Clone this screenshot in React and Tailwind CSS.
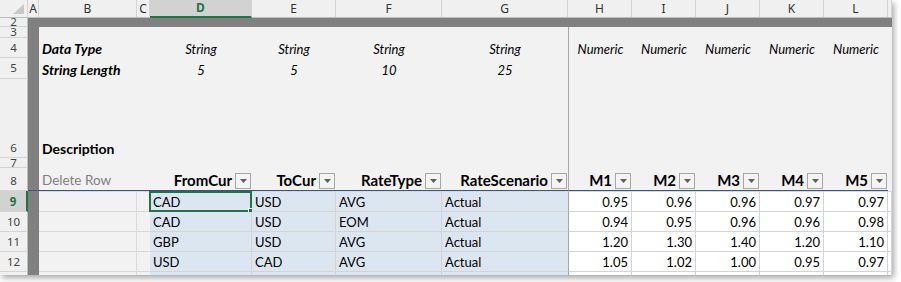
const COLW = ['w-[11px]', 'w-[98px]', 'w-[13px]', 'w-[102px]', 'w-[84px]', 'w-[106px]', 'w-[126px]', 'w-[64px]', 'w-[64px]', 'w-[64px]', 'w-[64px]', 'w-[64px]', 'w-[4px]'];
const LETTERS = ['A', 'B', 'C', 'D', 'E', 'F', 'G', 'H', 'I', 'J', 'K', 'L', ''];

const DATA = [
  { from: 'CAD', to: 'USD', type: 'AVG', scen: 'Actual', m: ['0.95', '0.96', '0.96', '0.97', '0.97'] },
  { from: 'CAD', to: 'USD', type: 'EOM', scen: 'Actual', m: ['0.94', '0.95', '0.96', '0.96', '0.98'] },
  { from: 'GBP', to: 'USD', type: 'AVG', scen: 'Actual', m: ['1.20', '1.30', '1.40', '1.20', '1.10'] },
  { from: 'USD', to: 'CAD', type: 'AVG', scen: 'Actual', m: ['1.05', '1.02', '1.00', '0.95', '0.97'] },
];

function RowHead({ label, active, center }) {
  return (
    <div
      className={`w-[28px] shrink-0 flex justify-center overflow-hidden border-b border-r font-['Noto_Sans',sans-serif] text-[11.5px] leading-[16px] ${center ? 'items-center' : 'items-end pb-[1px]'} ${active ? 'bg-[#d2d2d2] border-b-[#d4d4d4] border-r-2 border-r-[#217346] text-[#217346] font-bold' : 'bg-[#f0f0f0] border-b-[#d4d4d4] border-r-[#bdbdbd] text-[#444]'}`}
    >
      {label}
    </div>
  );
}

function Cell({ i, className = '', children }) {
  return <div className={`${COLW[i]} shrink-0 flex whitespace-nowrap ${className}`}>{children}</div>;
}

function Filter() {
  return (
    <div className="w-[16px] h-[16px] shrink-0 border border-[#a6a6a6] bg-[#f4f4f4] flex items-center justify-center">
      <svg width="7" height="4" viewBox="0 0 7 4">
        <polygon points="0,0 7,0 3.5,4" fill="#5f5f5f" />
      </svg>
    </div>
  );
}

// cells of the grey upper block (rows 3-8)
function topClass(i) {
  if (i === 0) return 'bg-[#808080]';
  if (i === 7) return 'border-l border-[#a6a6a6]';
  return '';
}

function TopRow({ h, label, center, cells = {}, align = {} }) {
  return (
    <div className={`flex ${h}`}>
      <RowHead label={label} center={center} />
      {COLW.map((_, i) => (
        <Cell key={i} i={i} className={`${topClass(i)} items-end ${align[i] || 'justify-center'}`}>
          {cells[i]}
        </Cell>
      ))}
    </div>
  );
}

function dataClass(i) {
  if (i === 0) return 'bg-[#808080]';
  if (i === 1) return 'bg-[#f2f2f2] border-r border-b border-[#d9d9d9]';
  if (i === 2) return 'bg-[#f2f2f2] border-b border-[#d9d9d9]';
  if (i >= 3 && i <= 5) return 'bg-[#dce6f1] border-r border-b border-[#d4d4d4]';
  if (i === 6) return 'bg-[#dce6f1] border-b border-[#d4d4d4]';
  if (i === 7) return 'bg-white border-l border-l-[#a6a6a6] border-r border-b border-[#d4d4d4]';
  return 'bg-white border-r border-b border-[#d4d4d4]';
}

export default function App() {
  const italic = (t) => <span className="italic text-[13px] leading-[18px] text-black">{t}</span>;
  const boldIt = (t) => <span className="italic font-bold text-[14px] leading-[18px] text-black pl-[3px]">{t}</span>;
  const head = (t) => (
    <div className="flex items-end gap-[3px] pb-[1px] pr-[1px]">
      <span className="font-bold text-[15px] leading-[18px] text-black">{t}</span>
      <Filter />
    </div>
  );

  return (
    <div className="w-[901px] h-[282px] bg-white">
      <div className="w-[892px] h-[275px] overflow-hidden bg-[#f2f2f2] shadow-[2px_3px_6px_rgba(0,0,0,0.35)] font-['Lato',sans-serif]">
        {/* column headers */}
        <div className="flex h-[18px] bg-[#f0f0f0] font-['Noto_Sans',sans-serif] text-[12px] text-[#333]">
          <div className="w-[28px] shrink-0 relative border-r border-b border-[#d4d4d4] border-b-[#bdbdbd]">
            <svg className="absolute right-[3px] bottom-[3px]" width="11" height="10" viewBox="0 0 11 10">
              <polygon points="11,0 11,10 0,10" fill="#c8c8c8" />
            </svg>
          </div>
          {LETTERS.map((l, i) => (
            <div
              key={i}
              className={`${COLW[i]} shrink-0 flex items-center justify-center border-r border-[#d4d4d4] ${i === 3 ? 'bg-[#d2d2d2] border-b-2 border-b-[#217346] text-[#217346] font-bold' : 'border-b border-b-[#bdbdbd]'}`}
            >
              {l}
            </div>
          ))}
        </div>

        {/* row 2: frozen bar */}
        <div className="flex h-[9px]">
          <RowHead label="2" center />
          <div className="flex-1 bg-[#808080]" />
        </div>

        <TopRow h="h-[11px]" label="3" center />
        <TopRow
          h="h-[20px]"
          label="4"
          center
          align={{ 1: 'justify-start' }}
          cells={{
            1: boldIt('Data Type'),
            3: italic('String'),
            4: italic('String'),
            5: italic('String'),
            6: italic('String'),
            7: italic('Numeric'),
            8: italic('Numeric'),
            9: italic('Numeric'),
            10: italic('Numeric'),
            11: italic('Numeric'),
          }}
        />
        <TopRow
          h="h-[21px]"
          label="5"
          center
          align={{ 1: 'justify-start' }}
          cells={{
            1: boldIt('String Length'),
            3: italic('5'),
            4: italic('5'),
            5: italic('10'),
            6: italic('25'),
          }}
        />
        <TopRow
          h="h-[79px]"
          label="6"
          align={{ 1: 'justify-start' }}
          cells={{ 1: <span className="font-bold text-[14px] leading-[18px] text-black pl-[3px]">Description</span> }}
        />
        <TopRow h="h-[10px]" label="7" center />

        {/* row 8: table headers */}
        <div className="flex h-[23px]">
          <RowHead label="8" />
          {COLW.map((_, i) => (
            <Cell
              key={i}
              i={i}
              className={`${topClass(i)} items-end ${i === 1 ? 'justify-start' : 'justify-end'} ${i >= 0 && i <= 11 ? 'border-b border-b-[#2f5597]' : ''}`}
            >
              {i === 1 && <span className="text-[13.5px] leading-[18px] text-[#808080] pl-[3px] pb-[1px]">Delete Row</span>}
              {i === 3 && head('FromCur')}
              {i === 4 && head('ToCur')}
              {i === 5 && head('RateType')}
              {i === 6 && head('RateScenario')}
              {i >= 7 && i <= 11 && head(`M${i - 6}`)}
            </Cell>
          ))}
        </div>

        {/* data rows */}
        {DATA.map((r, ri) => (
          <div key={ri} className={`flex ${ri === 0 ? 'h-[21px]' : 'h-[20px]'}`}>
            <RowHead label={String(9 + ri)} active={ri === 0} />
            {COLW.map((_, i) => {
              let content = null;
              if (i === 3) content = r.from;
              if (i === 4) content = r.to;
              if (i === 5) content = r.type;
              if (i === 6) content = r.scen;
              if (i >= 7 && i <= 11) content = r.m[i - 7];
              return (
                <Cell
                  key={i}
                  i={i}
                  className={`${dataClass(i)} ${ri === 0 && i > 0 ? 'border-t border-t-[#d9d9d9]' : ''} relative items-end text-[13px] leading-[18px] text-black ${i >= 7 ? 'justify-end pr-[3px]' : 'justify-start pl-[3px]'}`}
                >
                  {content}
                  {ri === 0 && i === 3 && (
                    <div className="absolute -left-[1px] -top-[1px] -right-[1px] -bottom-[1px] border-2 border-[#217346]">
                      <div className="absolute -right-[4px] -bottom-[4px] w-[6px] h-[6px] bg-[#217346] border border-white" />
                    </div>
                  )}
                </Cell>
              );
            })}
          </div>
        ))}

        {/* row 13 partial */}
        <div className="flex h-[3px]">
          <div className="w-[28px] shrink-0 bg-[#f0f0f0] border-r border-[#bdbdbd]" />
          {COLW.map((_, i) => (
            <Cell key={i} i={i} className={dataClass(i).replace('border-b', '')} />
          ))}
        </div>
      </div>
    </div>
  );
}
